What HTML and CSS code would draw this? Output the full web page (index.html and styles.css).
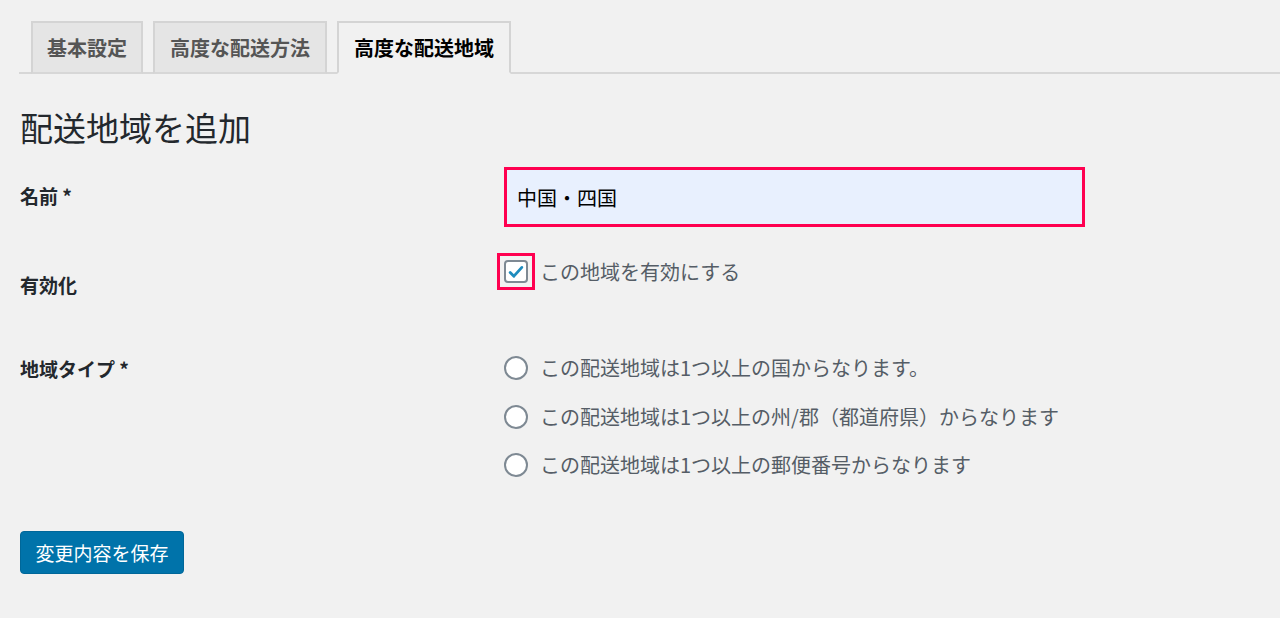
FILE: index.html
```html
<!DOCTYPE html>
<html lang="ja">
<head>
<meta charset="utf-8">
<link rel="stylesheet" href="styles.css">
</head>
<body>
<div class="wrap">
  <nav class="tabs">
    <a class="tab">基本設定</a>
    <a class="tab">高度な配送方法</a>
    <a class="tab active">高度な配送地域</a>
  </nav>
  <h1 class="title">配送地域を追加</h1>
  <div class="form">
    <div class="row row-name">
      <div class="label">名前 *</div>
      <div class="field">
        <div class="input">中国・四国</div>
      </div>
    </div>
    <div class="row row-enable">
      <div class="label">有効化</div>
      <div class="field check-field">
        <span class="check-outline"><span class="checkbox"><svg viewBox="0 0 24 24" width="20" height="20"><path d="M5 12.5l4.5 4.5L19 6.5" fill="none" stroke="#1e8cbe" stroke-width="3.4" stroke-linecap="round" stroke-linejoin="round"/></svg></span></span>
        <span class="opt-text">この地域を有効にする</span>
      </div>
    </div>
    <div class="row row-type">
      <div class="label">地域タイプ *</div>
      <div class="field radios">
        <div class="radio-row"><span class="radio"></span><span class="opt-text">この配送地域は1つ以上の国からなります。</span></div>
        <div class="radio-row"><span class="radio"></span><span class="opt-text">この配送地域は1つ以上の州/郡（都道府県）からなります</span></div>
        <div class="radio-row"><span class="radio"></span><span class="opt-text">この配送地域は1つ以上の郵便番号からなります</span></div>
      </div>
    </div>
  </div>
  <button class="save">変更内容を保存</button>
</div>
</body>
</html>
```

FILE: styles.css
```css
html, body {
  margin: 0;
  padding: 0;
  background: #f1f1f1;
}
body {
  font-family: "Noto Sans CJK JP", "Noto Sans", sans-serif;
  color: #23282d;
  font-size: 20px;
}
.wrap {
  padding: 21px 0 0 19px;
}
.tabs {
  display: flex;
  align-items: flex-end;
  gap: 10px;
  padding-left: 12px;
  border-bottom: 2px solid #d7d7d7;
  height: 51px;
}
.tab {
  display: flex;
  align-items: center;
  height: 49px;
  padding: 0 14px;
  background: #e5e5e5;
  border: 2px solid #d4d4d4;
  font-size: 20px;
  font-weight: 700;
  color: #555;
  margin-bottom: -2px;
  border-bottom: 2px solid #d7d7d7;
}
.tab:nth-child(2) { padding: 0 15px; }
.tab.active {
  background: #f1f1f1;
  color: #000;
  border-bottom: 2px solid #f1f1f1;
  padding: 0 15px;
}
.title {
  margin: 31px 0 0 1px;
  font-size: 33px;
  font-weight: 400;
  line-height: 44px;
  color: #23282d;
}
.form {
  margin-top: 18px;
}
.row {
  display: flex;
}
.label {
  width: 477px;
  flex: none;
  font-weight: 700;
  font-size: 19px;
  line-height: 24px;
  color: #23282d;
  padding-left: 1px;
}
.row-name .label { padding-top: 17px; }
.row-name .field { padding-left: 7px; }
.input {
  width: 565px;
  height: 54px;
  border: 3px solid #ff0050;
  background: #e8f0fe;
  box-sizing: content-box;
  display: flex;
  align-items: center;
  padding-left: 10px;
  font-size: 20px;
  color: #000;
}
.row-enable {
  margin-top: 26px;
}
.row-enable .label { padding-top: 20px; }
.check-field {
  display: flex;
  align-items: center;
  height: 37px;
}
.check-outline {
  width: 32px;
  height: 31px;
  border: 3px solid #ff0050;
  display: flex;
  align-items: center;
  justify-content: center;
  margin-right: 5px;
}
.checkbox {
  width: 20px;
  height: 19px;
  border: 2px solid #7e8993;
  border-radius: 4px;
  background: #fff;
  display: flex;
  align-items: center;
  justify-content: center;
}
.checkbox svg { display: block; }
.opt-text {
  font-size: 20px;
  line-height: 24px;
  color: #555d66;
}
.row-type {
  margin-top: 59px;
}
.row-type .label { padding-top: 1px; }
.radios {
  display: flex;
  flex-direction: column;
  gap: 24.5px;
  padding-left: 7px;
}
.radio-row {
  display: flex;
  align-items: center;
  height: 24px;
}
.radio {
  width: 20px;
  height: 20px;
  border: 2px solid #7e8993;
  border-radius: 50%;
  background: #fff;
  margin-right: 12px;
  flex: none;
}
.save {
  margin-top: 54px;
  margin-left: 1px;
  width: 164px;
  height: 43px;
  background: #0073aa;
  border: 1px solid #006799;
  border-radius: 4px;
  color: #fff;
  font-family: "Noto Sans CJK JP", "Noto Sans", sans-serif;
  font-size: 19px;
  padding: 0;
  cursor: pointer;
}
```
